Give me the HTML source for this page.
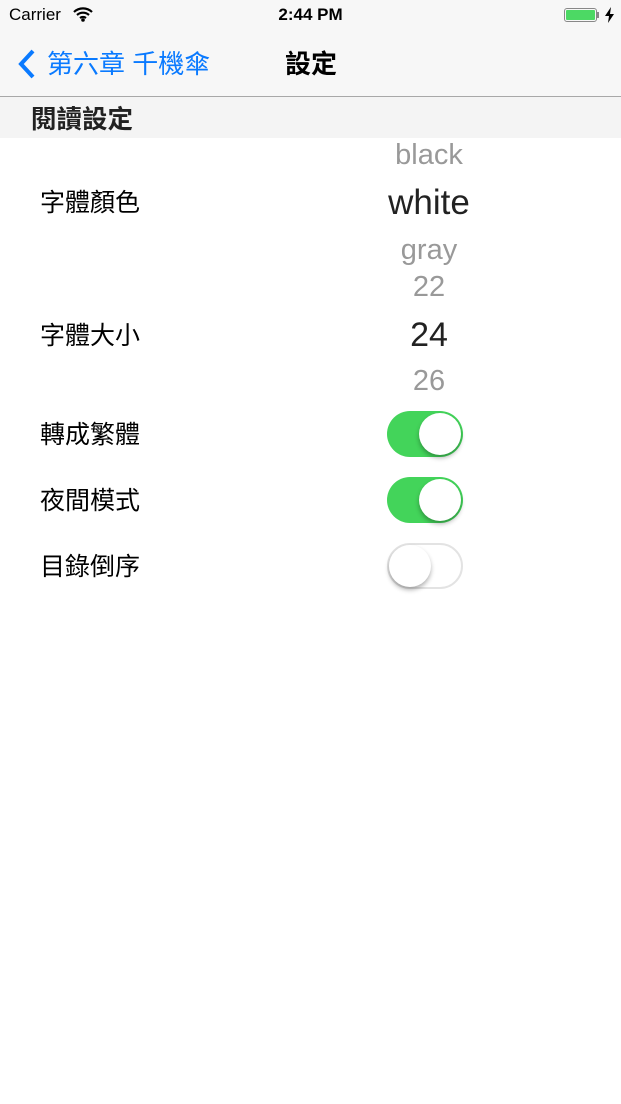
<!DOCTYPE html>
<html><head><meta charset="utf-8"><style>
body{margin:0;width:621px;height:1104px;background:#fff;font-family:"Liberation Sans","Noto Sans CJK TC",sans-serif;position:relative;overflow:hidden}
.a{position:absolute;white-space:nowrap}
.bar{position:absolute;left:0;top:0;width:621px;height:96px;background:#f7f7f7;border-bottom:1px solid #a8a8a8}
.sec{position:absolute;left:0;top:97px;width:621px;height:41px;background:#f4f4f4}
.lbl{font-size:25px;color:#000;left:40px}
.pk{left:329px;width:200px;text-align:center}
.sw{position:absolute;left:387px;width:76px;height:46px;border-radius:23px;box-sizing:border-box}
.on{background:#43d45a}
.off{background:#fff;border:2px solid #e3e3e3}
.k{position:absolute;top:2px;width:42px;height:42px;border-radius:21px;background:#fff;box-shadow:0 3px 5px rgba(0,0,0,.3)}
</style></head><body>
<div class="bar"></div>
<div class="a" style="left:9px;top:5px;font-size:17px">Carrier</div>
<svg class="a" style="left:73px;top:7px" width="20" height="15" viewBox="0 0 20 15"><path d="M1 5a13 13 0 0 1 18 0M4 8a9 9 0 0 1 12 0M7 11a5 5 0 0 1 6 0" stroke="#000" stroke-width="2.2" fill="none"/><circle cx="10" cy="13" r="1.8"/></svg>
<div class="a" style="left:0;width:621px;text-align:center;top:5px;font-size:17px;font-weight:bold">2:44 PM</div>
<div class="a" style="left:564px;top:8px;width:33px;height:14px;border:1px solid #888;border-radius:3px;box-sizing:border-box;padding:1px"><div style="background:#4cd964;height:100%;border-radius:1px"></div></div>
<div class="a" style="left:597px;top:12px;width:2px;height:6px;background:#888"></div>
<svg class="a" style="left:605px;top:7px" width="9" height="16" viewBox="0 0 9 16"><path d="M6 0 0 9h4l-1 7 6-9H5z" fill="#000"/></svg>
<svg class="a" style="left:17px;top:48px" width="20" height="32" viewBox="0 0 20 32"><path d="M16 3 4 16l12 13" stroke="#0a7aff" stroke-width="4" fill="none"/></svg>
<div class="a" style="left:47px;top:44px;font-size:26px;color:#0a7aff">第六章 千機傘</div>
<div class="a" style="left:285px;top:44px;font-size:26px;font-weight:bold">設定</div>
<div class="sec"></div>
<div class="a" style="left:31px;top:99px;font-size:25.5px;font-weight:bold;color:#222">閱讀設定</div>
<div class="a lbl" style="top:183px">字體顏色</div>
<div class="a pk" style="top:139px;font-size:29px;color:#999">black</div>
<div class="a pk" style="top:183px;font-size:35px;color:#222">white</div>
<div class="a pk" style="top:234px;font-size:29px;color:#999">gray</div>
<div class="a lbl" style="top:316px">字體大小</div>
<div class="a pk" style="top:271px;font-size:29px;color:#999">22</div>
<div class="a pk" style="top:316px;font-size:34px;color:#222">24</div>
<div class="a pk" style="top:365px;font-size:29px;color:#999">26</div>
<div class="a lbl" style="top:415px">轉成繁體</div>
<div class="sw on" style="top:411px"><div class="k" style="left:32px"></div></div>
<div class="a lbl" style="top:481px">夜間模式</div>
<div class="sw on" style="top:477px"><div class="k" style="left:32px"></div></div>
<div class="a lbl" style="top:547px">目錄倒序</div>
<div class="sw off" style="top:543px"><div class="k" style="left:0;top:0"></div></div>
</body></html>
